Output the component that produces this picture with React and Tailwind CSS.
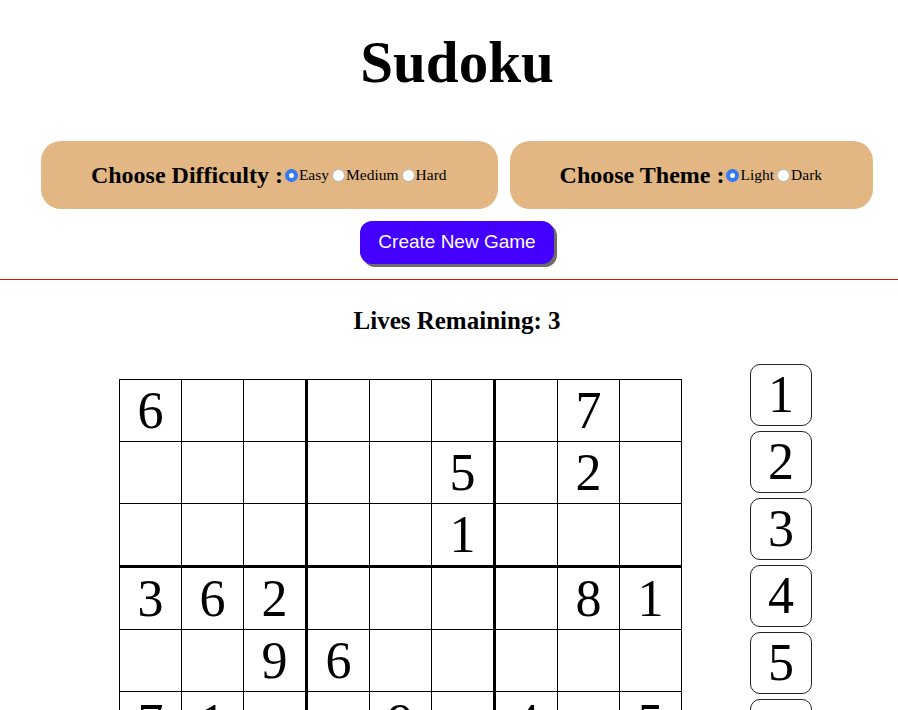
import { useState } from "react";

const board = [
  [6, 0, 0, 0, 0, 0, 0, 7, 0],
  [0, 0, 0, 0, 0, 5, 0, 2, 0],
  [0, 0, 0, 0, 0, 1, 0, 0, 0],
  [3, 6, 2, 0, 0, 0, 0, 8, 1],
  [0, 0, 9, 6, 0, 0, 0, 0, 0],
  [7, 1, 0, 0, 9, 0, 4, 0, 5],
];

function Radio({ checked, label, onClick }) {
  return (
    <span className="flex items-center cursor-pointer" onClick={onClick}>
      {checked ? (
        <span className="w-[13px] h-[13px] rounded-full bg-[#3478f6] flex items-center justify-center ml-[2px]">
          <span className="w-[5px] h-[5px] rounded-full bg-white" />
        </span>
      ) : (
        <span className="w-[13px] h-[13px] rounded-full bg-white border border-[#b5b5b5] ml-[2px]" />
      )}
      <span className="text-[15.5px] ml-[1px] mr-[1px] mt-[-1px]">{label}</span>
    </span>
  );
}

export default function App() {
  const [difficulty, setDifficulty] = useState("Easy");
  const [theme, setTheme] = useState("Light");

  return (
    <div className="w-[898px] h-[710px] overflow-hidden bg-white text-black font-['Liberation_Serif',serif]">
      {/* Header */}
      <div className="pl-4">
        <h1 className="text-[59px] font-bold text-center leading-none pt-[33px]">
          Sudoku
        </h1>

        <div className="flex justify-center gap-3 mt-[49px]">
          <div className="h-[68px] px-[50px] rounded-[20px] bg-[#e2b784] flex items-center">
            <span className="text-[24px] font-bold">Choose Difficulty :</span>
            {["Easy", "Medium", "Hard"].map((d) => (
              <Radio
                key={d}
                label={d}
                checked={difficulty === d}
                onClick={() => setDifficulty(d)}
              />
            ))}
          </div>
          <div className="h-[68px] px-[50px] rounded-[20px] bg-[#e2b784] flex items-center">
            <span className="text-[24px] font-bold">Choose Theme :</span>
            {["Light", "Dark"].map((t) => (
              <Radio
                key={t}
                label={t}
                checked={theme === t}
                onClick={() => setTheme(t)}
              />
            ))}
          </div>
        </div>

        <div className="flex justify-center mt-[12px]">
          <button className="w-[194px] h-[43px] rounded-[12px] bg-[#4400ff] text-white text-[19px] font-['Liberation_Sans',sans-serif] shadow-[3px_3px_0_#6b6b6b]">
            Create New Game
          </button>
        </div>
      </div>

      <hr className="mt-[15px] border-0 border-t border-[#d81414]" />

      <div className="pl-4">
        <div className="text-[25px] font-bold text-center leading-none mt-[28px]">
          Lives Remaining: 3
        </div>
      </div>

      {/* Board + number pad */}
      <div className="flex items-start pl-[119px] mt-[31px]">
        <div className="mt-[15px] border-t border-l border-black">
          {board.map((row, r) => (
            <div key={r} className="flex">
              {row.map((v, c) => (
                <div
                  key={c}
                  className={
                    "flex items-center justify-center text-[52px] leading-none border-black " +
                    (c === 2 || c === 5 ? "w-[64px] border-r-[3px] " : "w-[62px] border-r ") +
                    (r === 2 || r === 5 ? "h-[64px] border-b-[3px]" : "h-[62px] border-b")
                  }
                >
                  {v ? v : ""}
                </div>
              ))}
            </div>
          ))}
        </div>

        <div className="ml-[68px] flex flex-col gap-[5px]">
          {[1, 2, 3, 4, 5, 6, 7, 8, 9].map((n) => (
            <button
              key={n}
              className="w-[62px] h-[62px] rounded-[10px] border border-[#222] bg-white flex items-center justify-center text-[52px] leading-none font-['Liberation_Serif',serif]"
            >
              {n}
            </button>
          ))}
        </div>
      </div>
    </div>
  );
}
